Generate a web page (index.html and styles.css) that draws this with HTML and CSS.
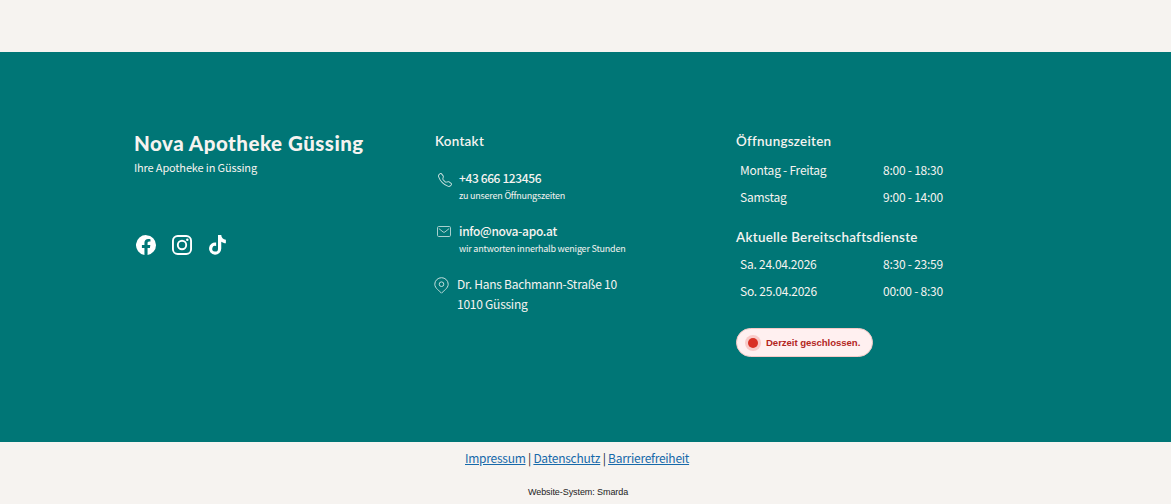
FILE: index.html
```html
<!DOCTYPE html>
<html lang="de">
<head>
<meta charset="utf-8">
<title>Nova Apotheke Güssing</title>
<link rel="stylesheet" href="styles.css">
</head>
<body>
<footer class="footer">
  <section class="brand">
    <h2 class="brand-name">Nova Apotheke Güssing</h2>
    <p class="tagline">Ihre Apotheke in Güssing</p>
    <div class="social">
      <svg width="20" height="20" viewBox="0 0 16 16" fill="#fff"><path d="M16 8.05A8 8 0 1 0 6.75 16v-5.62H4.72V8.05h2.03V6.28c0-2.02 1.2-3.13 3.02-3.13.88 0 1.8.16 1.8.16v1.98h-1.01c-1 0-1.31.62-1.31 1.26v1.5h2.22l-.35 2.33H9.25V16A8 8 0 0 0 16 8.05"/></svg>
      <svg width="20" height="20" viewBox="0 0 20 20" fill="none" stroke="#fff" stroke-width="1.9"><rect x=".95" y=".95" width="18.1" height="18.1" rx="4.8"/><circle cx="10" cy="10" r="4.2"/><circle cx="15.3" cy="4.7" r="1.25" fill="#fff" stroke="none"/></svg>
      <svg width="20" height="20" viewBox="0 0 16 16" fill="#fff"><path d="M8 0h2.600c.1 2.200 1.500 3.600 3.700 3.800v2.800c-1.400 0-2.700-.5-3.700-1.200v5.400A4.900 4.900 0 1 1 6.500 6v2.800a2.300 2.300 0 1 0 1.500 2.100z"/></svg>
    </div>
  </section>
  <section class="contact">
    <h3 class="heading">Kontakt</h3>
    <div class="contact-row">
      <svg class="icon" width="14" height="14" viewBox="0 0 16 16" fill="#c4dfdd"><path d="M3.65 1.33a.68.68 0 0 0-1.01-.06L1.6 2.3c-.48.49-.66 1.18-.45 1.77a17.6 17.6 0 0 0 4.17 6.6 17.6 17.6 0 0 0 6.6 4.18c.6.2 1.29.03 1.78-.46l1.03-1.03a.68.68 0 0 0-.06-1.02l-2.3-1.79a.68.68 0 0 0-.59-.12l-2.18.55a1.75 1.75 0 0 1-1.66-.46L5.48 8.06a1.75 1.75 0 0 1-.46-1.66l.55-2.19a.68.68 0 0 0-.12-.58zM1.88.51a1.75 1.75 0 0 1 2.61.16l1.8 2.31c.33.42.44.97.31 1.49l-.54 2.19a.68.68 0 0 0 .17.64l2.46 2.46c.17.17.42.24.64.18l2.19-.55c.52-.13 1.07-.01 1.49.32l2.31 1.79c.83.65.9 1.87.16 2.61l-1.03 1.04c-.74.74-1.85 1.06-2.88.7a18.6 18.6 0 0 1-7.01-4.43A18.6 18.6 0 0 1 .13 4.4c-.36-1.03-.04-2.14.7-2.88z"/></svg>
      <div><p class="contact-main phone">+43 666 123456</p><p class="note">zu unseren Öffnungszeiten</p></div>
    </div>
    <div class="contact-row mail">
      <svg class="icon" width="14" height="11" viewBox="0 0 14 11" fill="none" stroke="#a9d0ce" stroke-width="1"><rect x=".5" y=".5" width="13" height="10" rx="1.2"/><path d="M1.800 2.500l4.300 3.500q.9.700 1.800 0L12.200 2.500"/></svg>
      <div><p class="contact-main">info@nova-apo.at</p><p class="note">wir antworten innerhalb weniger Stunden</p></div>
    </div>
    <div class="contact-row place">
      <svg class="icon" width="15" height="17" viewBox="0 0 15 17" fill="none" stroke="#c4dfdd"><path d="M7.500 16.200C6 14.200.8 11.400.8 7.200a6.700 6.500 0 0 1 13.400 0c0 4.200-5.200 7-6.700 9z"/><circle cx="7.500" cy="7.200" r="2.300"/></svg>
      <address class="address">Dr. Hans Bachmann-Straße 10<br>1010 Güssing</address>
    </div>
  </section>
  <section class="hours">
    <h3 class="heading">Öffnungszeiten</h3>
    <dl class="times">
      <dt>Montag - Freitag</dt><dd>8:00 - 18:30</dd>
      <dt>Samstag</dt><dd>9:00 - 14:00</dd>
    </dl>
    <h3 class="heading duty">Aktuelle Bereitschaftsdienste</h3>
    <dl class="times">
      <dt>Sa. 24.04.2026</dt><dd>8:30 - 23:59</dd>
      <dt>So. 25.04.2026</dt><dd>00:00 - 8:30</dd>
    </dl>
    <div class="status"><span class="dot"></span>Derzeit geschlossen.</div>
  </section>
</footer>
<nav class="legal"><a href="#">Impressum</a> | <a href="#">Datenschutz</a> | <a href="#">Barrierefreiheit</a></nav>
<p class="system">Website-System: Smarda</p>
</body>
</html>
```
FILE: styles.css
```css
* { box-sizing: border-box; }
body { margin: 0; padding-top: 52px; height: 504px; overflow: hidden; background: #f6f3f0; font-family: "Noto Sans CJK SC", "Noto Sans", sans-serif; }
h2, h3, p, dl, dd { margin: 0; }
.footer { height: 390px; padding: 80px 0 0 134px; display: grid; grid-template-columns: 301px 301px 210px; align-items: start; background: #007676; color: #f6f3f0; }
.brand-name { font: 900 20.500px/22px Lato, sans-serif; letter-spacing: .5px; white-space: nowrap; }
.tagline { margin-top: 4px; font-size: 11px; line-height: 18px; letter-spacing: -.15px; }
.social { display: flex; gap: 16px; margin: 59px 0 0 2px; }
.heading { font: 600 13.400px/18px Lato, sans-serif; letter-spacing: .28px; white-space: nowrap; }
.contact-row { display: flex; gap: 7px; height: 53px; padding-left: 3px; }
.contact .heading { margin-bottom: 18px; }
.icon { flex: none; margin-top: 5px; }
.contact-main { font-size: 12px; line-height: 20px; font-weight: 500; letter-spacing: -.32px; }
.phone { letter-spacing: -.38px; }
.mail { gap: 8px; padding-left: 2px; }
.note { padding-top: 1px; font-size: 9px; line-height: 14px; letter-spacing: -.21px; white-space: nowrap; }
.place { gap: 8px; padding-left: 0; margin-left: -1px; }
.place .icon { margin-top: 3px; }
.address { font-size: 12px; line-height: 20px; letter-spacing: -.25px; font-style: normal; white-space: nowrap; }
.times { display: grid; grid-template-columns: 143px auto; padding: 6px 0 0 4px; font-size: 12px; line-height: 27px; letter-spacing: -.24px; }
.duty { margin-top: 18px; }
.duty + .times { padding-top: 4px; }
.status { display: flex; align-items: center; gap: 8px; width: 137px; height: 29px; margin-top: 24px; padding-left: 11px; border: 1px solid #f6c9c6; border-radius: 15px; background: #fff0f0; color: #b3261e; font: 700 9.600px/26px "Liberation Sans", Arial, sans-serif; letter-spacing: -.06px; white-space: nowrap; }
.dot { width: 10px; height: 10px; border-radius: 50%; background: #d93025; box-shadow: 0 0 0 3px #f9cbc9; }
.legal { padding: 6px 0 0 465px; font-size: 12px; line-height: 20px; letter-spacing: -.26px; color: #212529; white-space: nowrap; }
.legal a { color: #1769aa; }
.system { padding: 15px 0 0 528px; font: 9px/18px "Liberation Sans", Arial, sans-serif; letter-spacing: -.08px; color: #222; }
```
